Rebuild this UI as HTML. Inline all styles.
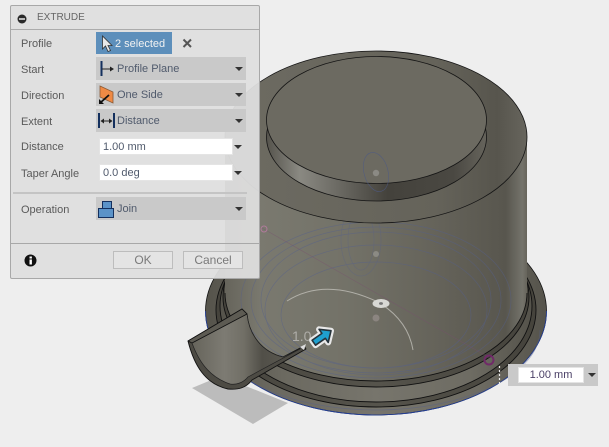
<!DOCTYPE html>
<html><head><meta charset="utf-8">
<style>
html,body{margin:0;padding:0;width:609px;height:447px;overflow:hidden;background:#eeeeee;font-family:"Liberation Sans",sans-serif;}
svg.m{position:absolute;left:0;top:0}
#p{position:absolute;left:10px;top:5px;width:248px;height:272px;background:rgba(222,222,222,.95);border:1px solid #a8a8a8;border-radius:2px;}
.a{position:absolute;font-size:11px;line-height:14px;color:#5a5a5a;white-space:nowrap}
.dd{position:absolute;left:85px;width:150px;height:23px;background:#c9c9c9}
.dd span{position:absolute;left:21px;top:5px;font-size:11px;line-height:14px;color:#505a6c;white-space:nowrap}
.tri{position:absolute;width:0;height:0;border-left:4px solid transparent;border-right:4px solid transparent;border-top:4px solid #333}
.in{position:absolute;background:#fff;border:1px solid #e4e4e4;box-sizing:border-box;font-size:11px;line-height:14px;color:#505a6c;padding-left:3px}
.b{position:absolute;top:245px;width:60px;height:18px;box-sizing:border-box;border:1px solid #bdbdbd;background:#e4e4e4;color:#7a7a7a;font-size:12px;line-height:16px;text-align:center}
</style></head><body>
<svg class="m" width="609" height="447" viewBox="0 0 609 447">
<defs>
<linearGradient id="g" x1="0" x2="1" y1="0" y2="0">
<stop offset="0" stop-color="#66645b"/><stop offset=".12" stop-color="#7a796f"/><stop offset=".4" stop-color="#737268"/><stop offset=".7" stop-color="#65635a"/><stop offset=".93" stop-color="#58564e"/><stop offset=".985" stop-color="#74736b"/><stop offset="1" stop-color="#66645b"/>
</linearGradient>
<linearGradient id="f" x1="0" x2="1" y1="0" y2="0">
<stop offset="0" stop-color="#55534b"/><stop offset=".2" stop-color="#6b6960"/><stop offset=".5" stop-color="#77756c"/><stop offset=".8" stop-color="#6e6c63"/><stop offset="1" stop-color="#55534b"/>
</linearGradient>
<linearGradient id="d" x1="0" x2="1" y1="0" y2="0">
<stop offset="0" stop-color="#45433c"/><stop offset=".5" stop-color="#56544c"/><stop offset="1" stop-color="#45433c"/>
</linearGradient>
<linearGradient id="t" x1="0" x2="1" y1="0" y2="0">
<stop offset="0" stop-color="#6d6b62"/><stop offset=".7" stop-color="#65635a"/><stop offset=".9" stop-color="#57554d"/><stop offset="1" stop-color="#67655d"/>
</linearGradient>
<linearGradient id="s" x1="0" x2="1" y1="0" y2="0">
<stop offset="0" stop-color="#55534c"/><stop offset=".15" stop-color="#8a8982"/><stop offset=".55" stop-color="#44423c"/><stop offset=".85" stop-color="#4a4842"/><stop offset="1" stop-color="#66645c"/>
</linearGradient>
<linearGradient id="sc" x1="0" x2="1" y1="0" y2="0">
<stop offset="0" stop-color="#66645b"/><stop offset=".3" stop-color="#7d7b73"/><stop offset=".48" stop-color="#716f66"/><stop offset=".65" stop-color="#514f48"/><stop offset=".85" stop-color="#59574f"/><stop offset="1" stop-color="#6a6860"/>
</linearGradient>
</defs>
<polygon points="192,388 221,376 288,403 253,424" fill="#bcbcbc"/>
<!-- flange -->
<ellipse cx="376" cy="311" rx="170.500" ry="104" fill="url(#f)" stroke="#111" stroke-width=".8"/>
<path d="M205.500 311A170.500 104 0 0 0 546.500 311" fill="none" stroke="#23409e" stroke-width=".8"/>
<ellipse cx="376" cy="310" rx="160" ry="97" fill="url(#d)" stroke="#111" stroke-width=".9"/>
<ellipse cx="376" cy="306" rx="156" ry="96" fill="url(#f)" stroke="#111" stroke-width=".9"/>
<ellipse cx="376" cy="297" rx="153" ry="90" fill="url(#d)" stroke="#111" stroke-width=".9"/>
<path d="M225 137V293A151 88 0 0 0 527 293V137Z" fill="url(#g)"/>
<path d="M225 293A151 88 0 0 0 527 293" fill="none" stroke="#111" stroke-width=".9"/>
<!-- sketch lines -->
<g fill="none" stroke="#55608c" stroke-width=".7" opacity=".5">
<ellipse cx="376" cy="300" rx="135" ry="78"/>
<ellipse cx="376" cy="300" rx="125" ry="73"/>
<ellipse cx="376" cy="300" rx="115" ry="68"/>
<ellipse cx="376" cy="310" rx="111" ry="65"/>
<ellipse cx="376" cy="315" rx="95" ry="53"/>
<ellipse cx="361" cy="240" rx="20" ry="36" opacity=".7"/>
<ellipse cx="361" cy="240" rx="13" ry="30" opacity=".7"/>
<path d="M212 330A164 80 0 0 0 540 330"/>
</g>
<path d="M262 228L490 358" stroke="#7a5070" stroke-width=".6" fill="none" opacity=".5"/>
<circle cx="264" cy="229" r="3" fill="none" stroke="#b07a9a" stroke-width="1"/>
<circle cx="489" cy="360" r="4.500" fill="none" stroke="#702a68" stroke-width="2"/>
<!-- top -->
<ellipse cx="376" cy="137" rx="151" ry="86" fill="url(#t)" stroke="#151515" stroke-width=".8"/>
<ellipse cx="376.500" cy="137" rx="110" ry="64" fill="url(#s)" stroke="#151515" stroke-width=".8"/>
<ellipse cx="376.500" cy="120" rx="110" ry="63.500" fill="#6c6a61" stroke="#151515" stroke-width=".8"/>
<ellipse cx="376" cy="172" rx="12" ry="20" transform="rotate(-15 376 172)" fill="none" stroke="#4d5a85" stroke-width=".6" opacity=".8"/>
<circle cx="376" cy="173" r="3.200" fill="#8b8a84"/>
<circle cx="376" cy="254" r="3" fill="#8b8a84"/>
<circle cx="376" cy="318" r="3.500" fill="#8b8580"/>
<path d="M287 301Q325 277 378 302Q408 320 413 350" fill="none" stroke="#c5c4be" stroke-width="1" opacity=".75"/>
<ellipse cx="381" cy="303.500" rx="8.500" ry="4.500" fill="#d8d8d4"/>
<ellipse cx="381" cy="303.500" rx="2" ry="1.400" fill="#777"/>
<!-- scoop -->
<path d="M188 341L242 309L247 314C249 335 262 352 283 357L304 346L306 349L252 380C246 388 238 390 228 389C205 384 194 365 188 341Z" fill="#4d4b44" stroke="#111" stroke-width=".9" stroke-linejoin="round"/>
<path d="M192 343L247 314C249 335 262 352 283 357L300 349L248 377C243 383 236 385 230 384C212 378 200 365 192 343Z" fill="url(#sc)" stroke="#222" stroke-width=".7"/>
<path d="M188 341L242 309L247 314L192 343Z" fill="#5d5b53" stroke="#111" stroke-width=".8" stroke-linejoin="round"/>
<path d="M300 347L306 344L304 350Z" fill="#ddd"/>
<text x="292" y="341" font-family="Liberation Sans" font-size="14" fill="#aeada8">1.0</text>
<!-- blue arrow -->
<g transform="translate(322 337) rotate(-35)">
<path d="M-10 -3H2V-8L11 0L2 8V3H-10Z" fill="#e8e8e8" stroke="#e8e8e8" stroke-width="6" stroke-linejoin="round"/>
<path d="M-10 -3H2V-8L11 0L2 8V3H-10Z" fill="#1fa0cf" stroke="#26323a" stroke-width="1.600" stroke-linejoin="round"/>
</g>
<path d="M499.500 366V386" stroke="#eee" stroke-width="1.200" stroke-dasharray="2 2"/>
</svg>

<div id="p">
 <svg style="position:absolute;left:5px;top:7px" width="13" height="13"><circle cx="6" cy="6" r="4.500" fill="#2a2a2a"/><rect x="3" y="5.200" width="6" height="1.600" fill="#ddd"/></svg>
 <div class="a" style="left:26px;top:5px;font-size:10px;color:#666">EXTRUDE</div>
 <div style="position:absolute;left:0;top:23px;width:248px;height:1px;background:#ababab"></div>
 <div class="a" style="left:10px;top:31px">Profile</div>
 <div style="position:absolute;left:85px;top:26px;width:76px;height:22px;background:#5d8fbb"></div>
 <svg style="position:absolute;left:90px;top:29px" width="14" height="18"><path d="M1.500 1L1.500 14L4.500 11L7 16.500L9.500 15.500L7 10.500L11 10.500Z" fill="#e8e8e8" stroke="#333" stroke-width=".8"/></svg>
 <div class="a" style="left:104px;top:31px;color:#f2f2f2">2 selected</div>
 <svg style="position:absolute;left:171px;top:32px" width="11" height="11"><path d="M1.500 1.500L9 9M9 1.500L1.500 9" stroke="#555" stroke-width="2"/></svg>

 <div class="a" style="left:10px;top:57px">Start</div>
 <div class="dd" style="top:51px"><span>Profile Plane</span><i class="tri" style="left:139px;top:10px"></i>
  <svg style="position:absolute;left:3px;top:2px" width="18" height="19"><path d="M2.500 2V17" stroke="#14305e" stroke-width="2"/><path d="M3 10H13" stroke="#222" stroke-width="1"/><path d="M11 7.500L15 10L11 12.500Z" fill="#222"/></svg></div>

 <div class="a" style="left:10px;top:83px">Direction</div>
 <div class="dd" style="top:77px"><span>One Side</span><i class="tri" style="left:139px;top:10px"></i>
  <svg style="position:absolute;left:1px;top:1px" width="20" height="21"><path d="M3 2L16 8L16 19L3 13Z" fill="#ef8a45" stroke="#8c5a35" stroke-width=".8"/><path d="M12 11L3 19" stroke="#111" stroke-width="1.800"/><path d="M2 15V20H7Z" fill="#111"/></svg></div>

 <div class="a" style="left:10px;top:109px">Extent</div>
 <div class="dd" style="top:103px"><span>Distance</span><i class="tri" style="left:139px;top:10px"></i>
  <svg style="position:absolute;left:1px;top:2px" width="20" height="19"><path d="M2 2V17M17 2V17" stroke="#14305e" stroke-width="2"/><path d="M4 10H15" stroke="#222" stroke-width="1"/><path d="M7 7.500L3.500 10L7 12.500ZM12 7.500L15.500 10L12 12.500Z" fill="#222"/></svg></div>

 <div class="a" style="left:10px;top:134px">Distance</div>
 <div class="in" style="left:88px;top:132px;width:134px;height:17px;padding-top:1px">1.00 mm</div>
 <i class="tri" style="left:223px;top:139px"></i>

 <div class="a" style="left:10px;top:161px">Taper Angle</div>
 <div class="in" style="left:88px;top:158px;width:134px;height:17px;padding-top:1px">0.0 deg</div>
 <i class="tri" style="left:223px;top:165px"></i>

 <div style="position:absolute;left:2px;top:186px;width:234px;height:2px;background:#c4c4c4"></div>

 <div class="a" style="left:10px;top:197px">Operation</div>
 <div class="dd" style="top:191px"><span>Join</span><i class="tri" style="left:139px;top:10px"></i>
  <svg style="position:absolute;left:1px;top:2px" width="20" height="20"><rect x="5.500" y="2.500" width="9" height="10" fill="#5b93c8" stroke="#14305e"/><rect x="1.500" y="9.500" width="15" height="9" fill="#5b93c8" stroke="#14305e"/></svg></div>

 <div style="position:absolute;left:0;top:237px;width:248px;height:1px;background:#a8a8a8"></div>
 <svg style="position:absolute;left:13px;top:248px" width="14" height="14"><circle cx="6.500" cy="6.500" r="6" fill="#111"/><rect x="5.500" y="5.500" width="2.400" height="5" fill="#fff"/><rect x="5.500" y="2.500" width="2.400" height="2" fill="#fff"/></svg>
 <div class="b" style="left:102px">OK</div>
 <div class="b" style="left:172px">Cancel</div>
</div>

<div style="position:absolute;left:508px;top:364px;width:90px;height:22px;background:#c9c9c9"></div>
<div class="in" style="left:518px;top:367px;width:66px;height:16px;text-align:center;padding:0;color:#4a3f66">1.00 mm</div>
<i class="tri" style="left:588px;top:373px"></i>
</body></html>
